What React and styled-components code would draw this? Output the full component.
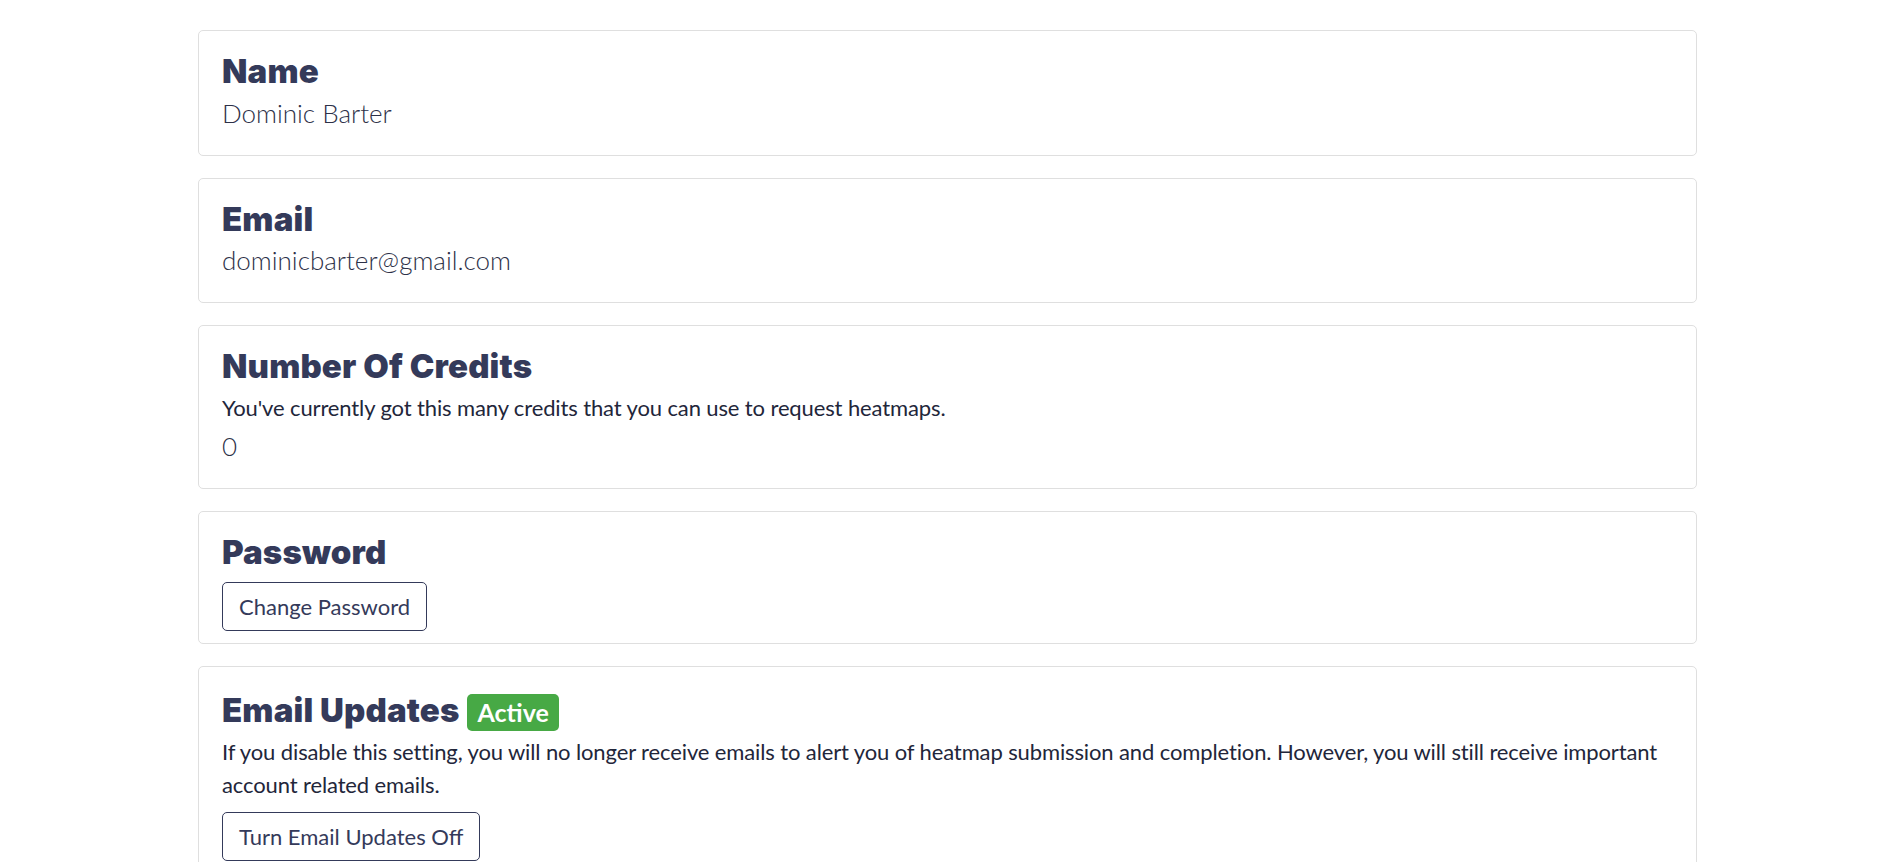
import styled, { createGlobalStyle } from "styled-components";

const GlobalStyle = createGlobalStyle`
  body {
    margin: 0;
    background: #fff;
    font-family: Lato, "Liberation Sans", sans-serif;
    color: #262a3d;
  }
`;

const Page = styled.main`
  padding: 30px 0 0 198px;
`;

const CardList = styled.section`
  width: 1499px;
  display: flex;
  flex-direction: column;
  gap: 22px;
`;

const Card = styled.div`
  box-sizing: border-box;
  border: 1px solid #dfdfdf;
  border-radius: 5px;
  padding: 21px 23px 12px;
  background: #fff;
`;

const TitleRow = styled.div`
  display: flex;
  align-items: baseline;
  gap: 8px;
  margin-bottom: 4px;
`;

const Title = styled.h2`
  margin: 0;
  font-family: Inter, "Liberation Sans", sans-serif;
  font-weight: 900;
  font-size: 33px;
  line-height: 1.2;
  letter-spacing: 0.15px;
  color: #343a5a;
`;

const Badge = styled.span`
  display: inline-block;
  margin-top: 6px;
  padding: 2px 10px;
  border-radius: 5px;
  background: #47a945;
  color: #fff;
  font-weight: 700;
  font-size: 25px;
  line-height: 33px;
`;

const Value = styled.p`
  margin: -2px 0 10px;
  font-weight: 300;
  font-size: 26px;
  line-height: 1.5;
  color: #2d3148;
`;

const Text = styled.p`
  margin: 0 0 5px;
  font-size: 22px;
  line-height: 1.5;
  letter-spacing: -0.12px;
  color: #22263a;
`;

const OutlineButton = styled.button`
  margin-top: 6px;
  padding: 7px 16px;
  border: 1px solid #343a5a;
  border-radius: 5px;
  background: #fff;
  color: #343a5a;
  font-family: Lato, "Liberation Sans", sans-serif;
  font-size: 22px;
  line-height: 33px;
  cursor: pointer;
`;

export default function App() {
  return (
    <>
      <GlobalStyle />
      <Page>
        <CardList>
          <Card>
            <TitleRow>
              <Title>Name</Title>
            </TitleRow>
            <Value>Dominic Barter</Value>
          </Card>
          <Card>
            <TitleRow>
              <Title>Email</Title>
            </TitleRow>
            <Value>dominicbarter@gmail.com</Value>
          </Card>
          <Card>
            <TitleRow>
              <Title>Number Of Credits</Title>
            </TitleRow>
            <Text>
              You've currently got this many credits that you can use to
              request heatmaps.
            </Text>
            <Value>0</Value>
          </Card>
          <Card>
            <TitleRow>
              <Title>Password</Title>
            </TitleRow>
            <OutlineButton>Change Password</OutlineButton>
          </Card>
          <Card>
            <TitleRow>
              <Title>Email Updates</Title>
              <Badge>Active</Badge>
            </TitleRow>
            <Text>
              If you disable this setting, you will no longer receive emails to
              alert you of heatmap submission and completion. However, you will
              still receive important account related emails.
            </Text>
            <OutlineButton>Turn Email Updates Off</OutlineButton>
          </Card>
        </CardList>
      </Page>
    </>
  );
}
